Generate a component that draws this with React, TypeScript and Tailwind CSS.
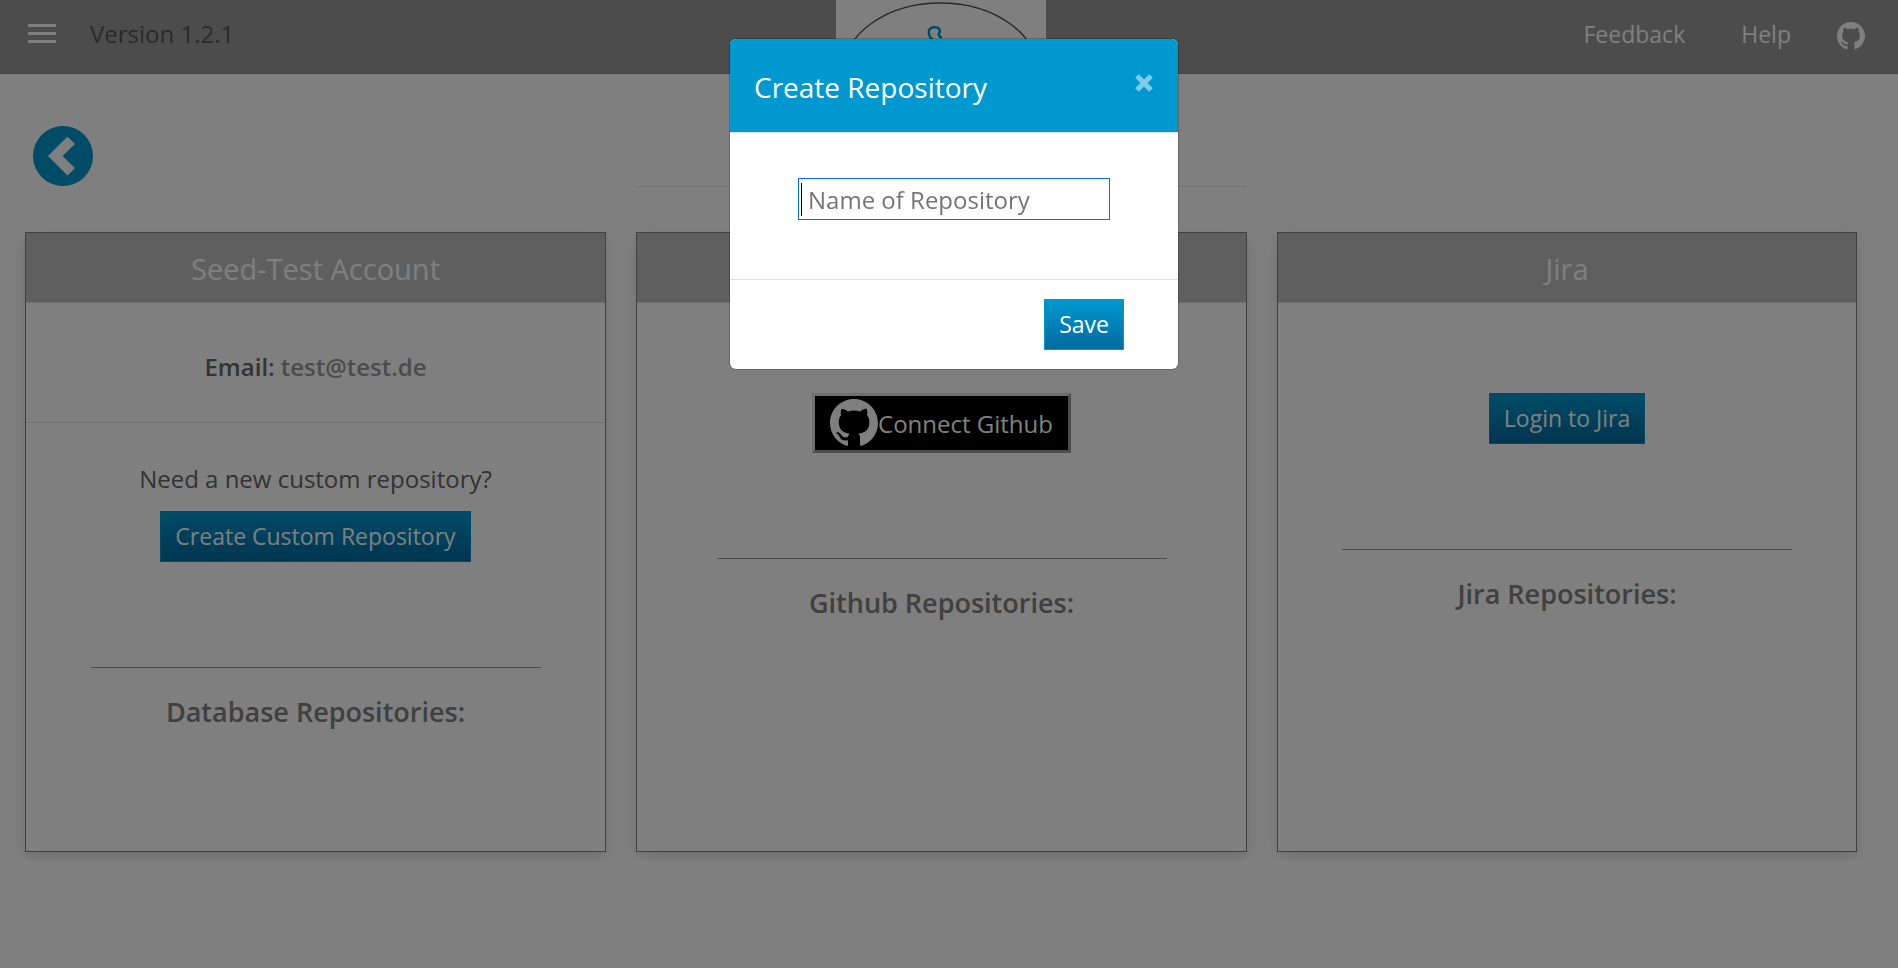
import type { ReactNode } from "react";

const OCTOCAT =
  "M8 0C3.58 0 0 3.58 0 8c0 3.54 2.29 6.53 5.47 7.59.4.07.55-.17.55-.38 0-.19-.01-.82-.01-1.49-2.01.37-2.53-.49-2.69-.94-.09-.23-.48-.94-.82-1.13-.28-.15-.68-.52-.01-.53.63-.01 1.08.58 1.23.82.72 1.21 1.87.87 2.33.66.07-.52.28-.87.51-1.07-1.78-.2-3.64-.89-3.64-3.95 0-.87.31-1.59.82-2.15-.08-.2-.36-1.02.08-2.12 0 0 .67-.21 2.2.82.64-.18 1.32-.27 2-.27s1.36.09 2 .27c1.53-1.04 2.2-.82 2.2-.82.44 1.1.16 1.92.08 2.12.51.56.82 1.27.82 2.15 0 3.07-1.87 3.75-3.65 3.95.29.25.54.73.54 1.48 0 1.07-.01 1.93-.01 2.2 0 .21.15.46.55.38A8.01 8.01 0 0 0 16 8c0-4.42-3.58-8-8-8Z";

function GithubMark({ className }: { className: string }) {
  return (
    <svg viewBox="0 0 16 16" className={className} fill="currentColor" aria-hidden="true">
      <path d={OCTOCAT} />
    </svg>
  );
}

function PrimaryButton({ children }: { children: ReactNode }) {
  return (
    <button
      type="button"
      className="h-[51px] border border-[#0099cf] bg-linear-to-b from-[#0099cf] to-[#006ba1] px-[14px] pb-0.5 text-[23px] leading-[30px] text-white"
    >
      {children}
    </button>
  );
}

function Card({ title, children }: { title: string; children: ReactNode }) {
  return (
    <section className="flex h-[620px] min-w-0 flex-col border border-[#808080] bg-white shadow-[0_4px_8px_0_rgba(0,0,0,0.05),0_6px_20px_0_rgba(0,0,0,0.08)]">
      <h2 className="flex h-[70px] shrink-0 items-center justify-center border-b border-[#dfdfdf] bg-[#bebebe] pt-0.5 text-[29px] leading-9 text-white">
        {title}
      </h2>
      {children}
    </section>
  );
}

function Repositories({ title }: { title: string }) {
  return (
    <div className="flex flex-col items-center">
      <hr className="w-[450px] max-w-full border-t border-[#999]" />
      <h3 className="mt-7 text-[27px] leading-8 font-semibold text-[#808080]">{title}</h3>
    </div>
  );
}

export default function App() {
  return (
    <div className="relative min-h-screen bg-white font-['Open_Sans','Noto_Sans',sans-serif] text-[24px] leading-8 text-[#666]">
      <header className="grid h-[74px] grid-cols-[1fr_auto_1fr] border-b border-[#808080] bg-[#999] pr-4">
        <div className="flex items-center pb-1.5 pl-7">
          <button type="button" aria-label="Menu" className="flex flex-col gap-[5px] text-white">
            <span className="h-[3px] w-7 bg-white" />
            <span className="h-[3px] w-7 bg-white" />
            <span className="h-[3px] w-7 bg-white" />
          </button>
          <span className="ml-[34px] text-[#555]">Version 1.2.1</span>
        </div>
        <div className="w-[210px] bg-white">
          <svg viewBox="0 0 210 73" className="h-[73px] w-[210px]" fill="none" aria-hidden="true">
            <ellipse cx="104.5" cy="73" rx="98" ry="70" stroke="#555" strokeWidth="1.5" />
            <path
              d="M97 40C91 35 91.500 27.500 98 27.200C104.500 27 104.800 31 102.800 34C102.500 36 104 37 106 37.500"
              stroke="#0099cf"
              strokeWidth="2.5"
            />
          </svg>
        </div>
        <nav className="flex items-center justify-end pr-[17px] pb-1.5 text-[23px] text-white">
          <a href="#feedback">Feedback</a>
          <a href="#help" className="ml-14">Help</a>
          <a href="#github" aria-label="GitHub" className="mt-1 ml-[46px]">
            <GithubMark className="size-7" />
          </a>
        </nav>
      </header>

      <main className="overflow-hidden pr-[41px] pb-[9px] pl-[25px]">
        <div className="grid h-[158px] grid-cols-[581fr_611fr_580fr] gap-[30px]">
          <div className="pt-[52px] pl-2">
            <button type="button" aria-label="Back" className="block size-[60px]">
              <svg viewBox="0 0 60 60" className="size-[60px]" aria-hidden="true">
                <circle cx="30" cy="30" r="30" fill="#0099cf" />
                <path d="M15 30 34.500 10.500 42 18 29.500 30 42 42 34.500 49.500Z" fill="#fff" />
              </svg>
            </button>
          </div>
          <hr className="mt-[112px] border-t border-[#e5e5e5]" />
        </div>

        <div className="grid grid-cols-[581fr_611fr_580fr] gap-[30px]">
          <Card title="Seed-Test Account">
            <p className="flex h-[120px] shrink-0 items-center justify-center gap-1.5 border-b border-[#e5e5e5] pt-2 font-semibold text-[#999]">
              <span className="text-[#666]">Email:</span> test@test.de
            </p>
            <div className="flex h-[244px] shrink-0 flex-col items-center pt-10">
              <p className="mb-4">Need a new custom repository?</p>
              <PrimaryButton>Create Custom Repository</PrimaryButton>
            </div>
            <Repositories title="Database Repositories:" />
          </Card>
          <Card title="Github">
            <div className="flex h-[255px] shrink-0 flex-col items-center pt-[90px]">
              <button
                type="button"
                className="flex h-[60px] items-center border-3 border-t-[#dfdfdf] border-r-[#999] border-b-[#999] border-l-[#dfdfdf] bg-black px-[15px] text-[24px] text-white"
              >
                <GithubMark className="size-12" />
                <span className="pt-0.5">Connect Github</span>
              </button>
            </div>
            <Repositories title="Github Repositories:" />
          </Card>
          <Card title="Jira">
            <div className="flex h-[246px] shrink-0 flex-col items-center pt-[90px]">
              <PrimaryButton>Login to Jira</PrimaryButton>
            </div>
            <Repositories title="Jira Repositories:" />
          </Card>
        </div>
      </main>

      <div className="fixed inset-0 flex items-start justify-center bg-black/50 pt-[39px] pl-[10px]">
        <form
          role="dialog"
          aria-modal="true"
          aria-labelledby="dialog-title"
          className="w-[448px] overflow-hidden rounded-md bg-white shadow-[0_0_0_1px_rgba(0,0,0,0.2)]"
        >
          <div className="flex h-[94px] items-start justify-between border-b border-[#dee2e6] bg-[#0099cf] pr-[25px] pl-6">
            <h1 id="dialog-title" className="pt-[30px] text-[28px] leading-9 text-white">
              Create Repository
            </h1>
            <button type="button" aria-label="Close" className="mt-[35px] text-white/50">
              <svg viewBox="0 0 18 18" className="size-[18px]" stroke="currentColor" strokeWidth="5" aria-hidden="true">
                <path d="M2 2 16 16M16 2 2 16" />
              </svg>
            </button>
          </div>
          <div className="flex h-[147px] items-start justify-center border-b border-[#dee2e6] pt-[45px]">
            <div className="relative">
              <input
                type="text"
                autoFocus
                aria-label="Name of Repository"
                placeholder="Name of Repository"
                className="block h-[42px] w-[312px] border border-[#0078d7] pr-2 pl-[9px] text-[24px] text-[#555] caret-transparent outline-none placeholder:text-[#757575]"
              />
              <span className="absolute top-[5px] left-[3px] h-[33px] w-px bg-black" />
            </div>
          </div>
          <div className="flex h-[89px] items-center justify-end pr-[54px]">
            <PrimaryButton>Save</PrimaryButton>
          </div>
        </form>
      </div>
    </div>
  );
}
